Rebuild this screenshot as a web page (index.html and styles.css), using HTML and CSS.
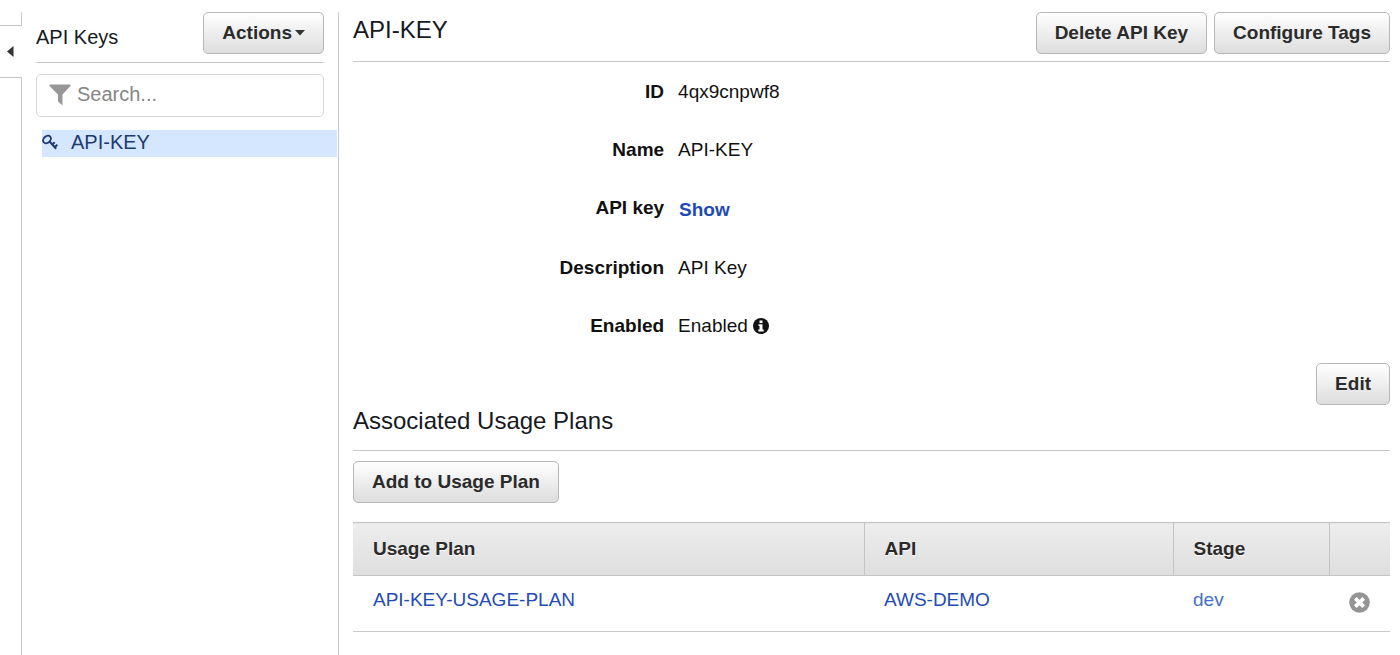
FILE: index.html
```html
<!DOCTYPE html>
<html lang="en">
<head>
<meta charset="utf-8">
<meta name="viewport" content="width=device-width, initial-scale=1">
<title>API Keys</title>
<link rel="stylesheet" href="styles.css">
</head>
<body>
<div class="app">
  <div class="rail">
    <div class="rail-top"></div>
    <button class="rail-toggle" type="button" aria-label="Collapse navigation">
      <svg width="7" height="11" viewBox="0 0 7 11" aria-hidden="true"><path d="M6.500 0v11L0 5.500z" fill="#333"/></svg>
    </button>
    <div class="rail-body"></div>
  </div>

  <aside class="sidebar">
    <div class="sidebar-head">
      <h2 class="sidebar-title">API Keys</h2>
      <button class="btn btn-menu" type="button">Actions<svg width="10" height="6" viewBox="0 0 10 6" aria-hidden="true"><path d="M0 0h10L5 5.500z" fill="#333"/></svg></button>
    </div>
    <label class="search">
      <svg width="22" height="22" viewBox="0 0 22 22" aria-hidden="true"><path d="M0.500 0.500h21v1.500l-8 8.500v11l-4.500-4v-7L0.500 2z" fill="#979797"/></svg>
      <input class="search-input" type="text" placeholder="Search..." aria-label="Search API keys">
    </label>
    <nav class="keys">
      <a class="key" href="#key">
        <svg width="16" height="16" viewBox="0 0 16 16" fill="none" stroke="#1f3b6e" aria-hidden="true"><ellipse cx="5" cy="5.500" rx="4.300" ry="3.200" stroke-width="1.900" transform="rotate(-40 5 5.500)"/><path d="M7.500 7.500l6.700 7.200M10.300 10.400l2.400-2.200M12.800 13l2.600-2.300" stroke-width="2"/></svg>
        <span>API-KEY</span>
      </a>
    </nav>
  </aside>

  <main class="main">
    <header class="main-head">
      <h1 class="title">API-KEY</h1>
      <div class="actions">
        <button class="btn" type="button">Delete API Key</button>
        <button class="btn" type="button">Configure Tags</button>
      </div>
    </header>

    <dl class="details">
      <dt>ID</dt><dd>4qx9cnpwf8</dd>
      <dt>Name</dt><dd>API-KEY</dd>
      <dt>API key</dt><dd class="show-cell"><a class="show" href="#show">Show</a></dd>
      <dt>Description</dt><dd>API Key</dd>
      <dt>Enabled</dt><dd class="enabled"><span>Enabled</span>
        <svg width="16" height="16" viewBox="0 0 16 16" role="img" aria-label="Information"><circle cx="8" cy="8" r="8" fill="#111"/><path d="M6.500 2.500h3v2.500h-3zM5.500 6.200h4v5.300h1.200v2H5.300v-2h1.200V8h-1z" fill="#fff"/></svg>
      </dd>
    </dl>

    <div class="edit-row"><button class="btn" type="button">Edit</button></div>

    <h2 class="title section-title">Associated Usage Plans</h2>
    <div class="toolbar"><button class="btn" type="button">Add to Usage Plan</button></div>

    <table class="plans">
      <colgroup><col class="col-plan"><col class="col-api"><col class="col-stage"><col class="col-remove"></colgroup>
      <thead>
        <tr><th scope="col">Usage Plan</th><th scope="col">API</th><th scope="col">Stage</th><th aria-label="Remove"></th></tr>
      </thead>
      <tbody>
        <tr>
          <td><a href="#plan">API-KEY-USAGE-PLAN</a></td>
          <td><a href="#api">AWS-DEMO</a></td>
          <td><a class="stage" href="#stage">dev</a></td>
          <td class="remove-cell"><button class="remove" type="button" aria-label="Remove usage plan"><svg width="21" height="21" viewBox="0 0 21 21" aria-hidden="true"><circle cx="10.500" cy="10.500" r="10.300" fill="#949494"/><path d="M6.300 6.300l8.400 8.400M14.700 6.300l-8.400 8.400" stroke="#fff" stroke-width="3.800"/></svg></button></td>
        </tr>
      </tbody>
    </table>
  </main>
</div>
</body>
</html>
```
FILE: styles.css
```css
* { box-sizing: border-box; }

body {
  margin: 0;
  background: #fff;
  color: #16191f;
  font: 19px/24px "Liberation Sans", Arial, sans-serif;
}

a { color: #1f4bb4; text-decoration: none; }
h1, h2 { margin: 0; font-weight: 400; }
svg { display: block; flex: none; }

.app { display: flex; min-height: 100vh; padding-top: 12px; }

/* Collapsed navigation rail */
.rail { display: flex; flex-direction: column; flex: 0 0 22px; }
.rail-top { height: 14px; border-right: 1px solid #c8c8c8; border-bottom: 1px solid #c8c8c8; }
.rail-toggle {
  display: flex;
  align-items: center;
  justify-content: center;
  height: 51px;
  padding: 0 2px 0 0;
  border: 0;
  background: none;
}
.rail-body { flex: 1; border-top: 1px solid #c8c8c8; border-right: 1px solid #c8c8c8; }

/* Key list */
.sidebar { flex: 0 0 317px; min-width: 0; padding-left: 14px; border-right: 1px solid #c8c8c8; }
.sidebar-head {
  display: flex;
  align-items: flex-start;
  justify-content: space-between;
  height: 51px;
  margin-right: 14px;
  border-bottom: 1px solid #c8c8c8;
}
.sidebar-title { padding-top: 13px; font-size: 20px; }

.btn {
  display: inline-flex;
  align-items: center;
  justify-content: center;
  height: 42px;
  padding: 0 18px;
  border: 1px solid #b7b7b7;
  border-radius: 5px;
  background: linear-gradient(#fff, #ddd);
  color: #2b2b2b;
  font: bold 19px/24px "Liberation Sans", Arial, sans-serif;
  white-space: nowrap;
}
.btn-menu { gap: 3px; }

.search {
  display: flex;
  align-items: center;
  gap: 6px;
  height: 43px;
  margin: 11px 14px 13px 0;
  padding: 0 12px 2px;
  border: 1px solid #d8d8d8;
  border-radius: 5px;
}
.search-input {
  flex: 1;
  width: 100%;
  min-width: 0;
  padding: 0 0 1px;
  border: 0;
  outline: 0;
  background: none;
  font: 20px/24px "Liberation Sans", Arial, sans-serif;
}
.search-input::placeholder { color: #858585; opacity: 1; }

.key {
  display: flex;
  align-items: center;
  gap: 13px;
  height: 27px;
  margin: 0 1px 0 6px;
  padding-bottom: 3px;
  background: #d4e7ff;
  color: #1f3b6e;
  font-size: 20px;
}

/* Key details */
.main { flex: 1; min-width: 0; padding: 0 10px 0 14px; }
.main-head {
  display: flex;
  align-items: flex-start;
  justify-content: space-between;
  height: 50px;
  border-bottom: 1px solid #c8c8c8;
}
.title { padding-top: 4px; font-size: 24px; line-height: 28px; }
.actions { display: flex; gap: 7px; }

.details {
  display: grid;
  grid-template-columns: 30% 1fr;
  column-gap: 14px;
  row-gap: 34px;
  margin: 0;
  padding-top: 18px;
  color: #111;
}
.details dt { font-weight: 700; text-align: right; }
.details dd { margin: 0; }
.show-cell { padding: 2px 0 0 1px; }
.show { font-weight: 700; }
.enabled { display: flex; align-items: center; gap: 5px; }

.edit-row { display: flex; justify-content: flex-end; padding-top: 25px; }
.section-title { padding: 2px 0 15px; border-bottom: 1px solid #c8c8c8; }
.toolbar { display: flex; padding: 10px 0 19px; }

/* Usage plans */
.plans { width: 100%; border-collapse: collapse; table-layout: fixed; text-align: left; }
.col-api { width: 309px; }
.col-stage { width: 156px; }
.col-remove { width: 61px; }
.plans th {
  height: 53px;
  padding: 0 20px;
  border: solid #c4c4c4;
  border-width: 1px 0;
  background: linear-gradient(#ededed, #dedede);
  color: #2b2b2b;
  text-shadow: 0 1px 1px #fff;
}
.plans th + th { border-left-width: 1px; }
.plans td {
  height: 56px;
  padding: 0 20px 8px;
  border-bottom: 1px solid #c8c8c8;
}
.plans td.remove-cell { padding: 0 20px 2px; }
.plans .stage { color: #4470c4; }
.remove { display: block; padding: 0; border: 0; background: none; }
```
